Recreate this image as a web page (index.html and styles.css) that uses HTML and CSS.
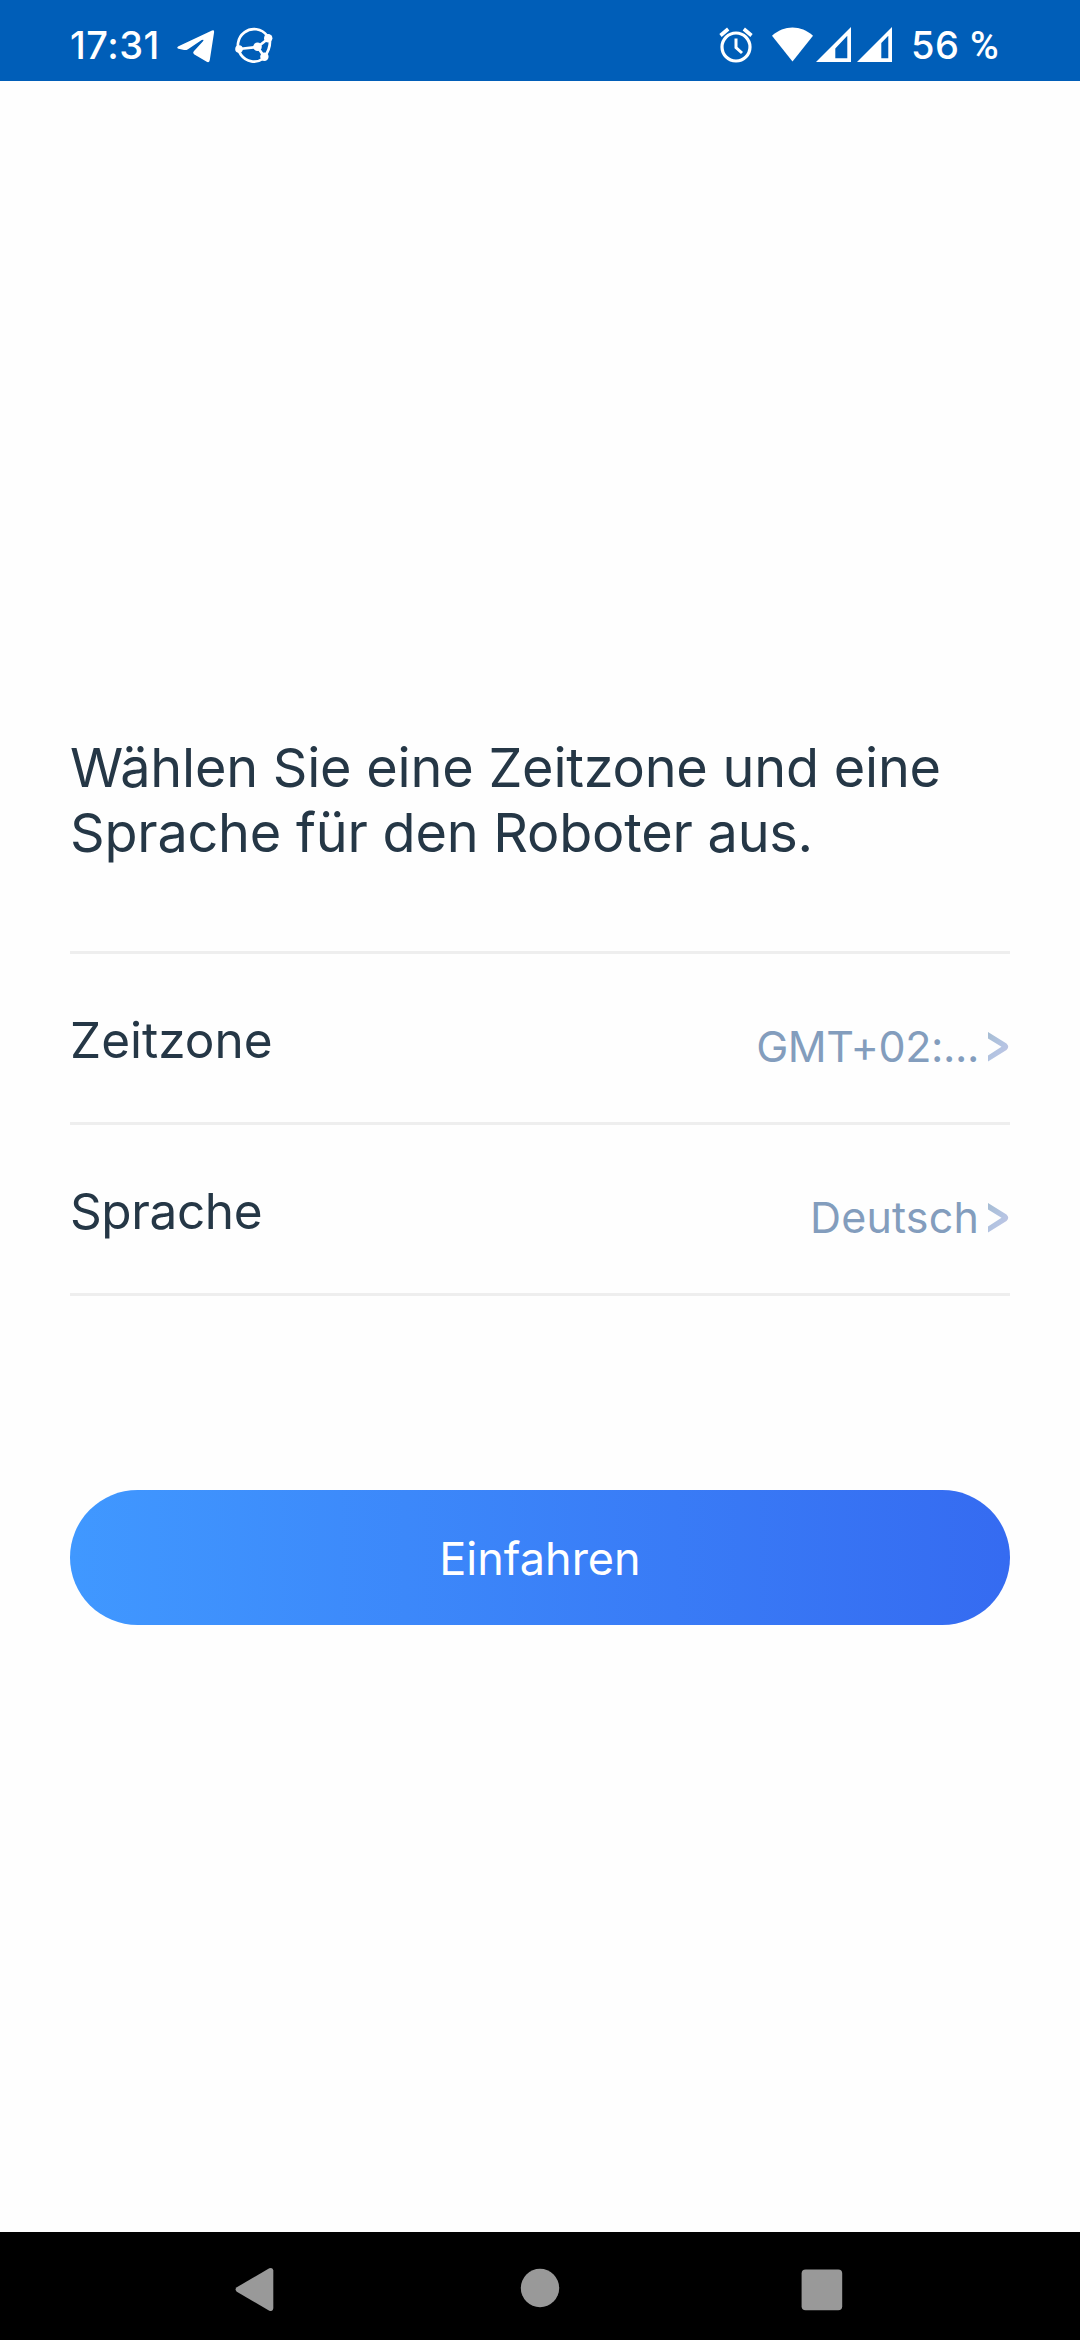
FILE: index.html
```html
<!DOCTYPE html>
<html lang="de">
<head>
<meta charset="utf-8">
<title>Zeitzone und Sprache</title>
<link rel="stylesheet" href="styles.css">
</head>
<body>
<div class="screen">
  <header class="status">
    <span class="clock">17:31</span>
    <svg class="telegram" width="40" height="36" viewBox="0 0 40 36"><path d="M3.5 18.2 37 2.6Q39.5 1.5 39.1 4.3L34.8 32Q34.2 35.4 31.3 33.6L19 26.2Q17.4 25 18.8 23.3L28 13.2Q29.5 10.8 26.7 12.1L13 21.2Q10.8 22.6 8 21.8L3.5 20.7Q1 19.7 3.5 18.2Z"/></svg>
    <svg class="globe" width="38" height="36" viewBox="0 0 38 36"><g fill="none" stroke="#fff" stroke-width="2.7"><path d="M32 8.5A16.2 16.2 0 1 0 28.5 31.5"/><path d="M34.5 11Q36.5 20 29.5 30M4 22 22.5 20 34 11M22.5 20 29.5 30"/></g><g fill="#fff"><circle cx="4" cy="22" r="3.8"/><circle cx="22.5" cy="19.8" r="4.3"/><circle cx="33.2" cy="11.2" r="4.2"/><circle cx="29.4" cy="29.8" r="4.2"/></g></svg>
    <div class="spacer"></div>
    <svg class="alarm" width="34" height="36" viewBox="0 0 34 36"><g fill="none" stroke="#fff"><circle cx="17" cy="20" r="14" stroke-width="3.2"/><path d="M17 11.5V20.5L23 26" stroke-width="3"/><path d="M1.5 8.5 9.2 2M32.5 8.5 24.8 2" stroke-width="3.6"/></g></svg>
    <svg class="wifi" width="41" height="35" viewBox="0 0 41 35"><path d="M0 8.7C12-2.4 29-2.4 41 8.7L20.5 34.5Z"/></svg>
    <svg class="signal" width="35" height="35" viewBox="0 0 35 35"><path fill-rule="evenodd" d="M35 0V35H0ZM31.3 8.7 19.3 21.4V31.3H31.3Z"/></svg>
    <svg class="signal second" width="35" height="35" viewBox="0 0 35 35"><path fill-rule="evenodd" d="M35 0V35H0ZM31.3 8.7 24.3 16.1V31.3H31.3Z"/></svg>
    <span class="battery">56 <span class="percent">%</span></span>
  </header>
  <main class="content">
    <h1 class="title">Wählen Sie eine Zeitzone und eine<br>Sprache für den Roboter aus.</h1>
    <div class="list">
      <div class="row timezone">
        <span class="label">Zeitzone</span>
        <span class="value">GMT+02:...</span>
        <svg class="chevron" width="21" height="30" viewBox="0 0 21 30"><defs><linearGradient id="tint" x1="0" y1="0" x2="1" y2="1"><stop offset="0" stop-color="#a6bdd3"/><stop offset=".6" stop-color="#b5c4e3"/><stop offset="1" stop-color="#c3c3e0"/></linearGradient></defs><path fill="url(#tint)" d="M0 0 18.5 11.5Q22 14.8 18.5 18L0 29.5V23.5L13.5 14.8 0 6.5Z"/></svg>
      </div>
      <div class="row language">
        <span class="label">Sprache</span>
        <span class="value">Deutsch</span>
        <svg class="chevron" width="21" height="30" viewBox="0 0 21 30"><path fill="url(#tint)" d="M0 0 18.5 11.5Q22 14.8 18.5 18L0 29.5V23.5L13.5 14.8 0 6.5Z"/></svg>
      </div>
    </div>
    <button class="submit">Einfahren</button>
  </main>
  <nav class="navbar">
    <svg width="40" height="46" viewBox="0 0 40 46"><path d="M1.8 20.3 34.3 1.3Q38 0 38.3 3.5V41Q38 45 34.3 43.7L1.8 24.7Q-.6 22.5 1.8 20.3Z"/></svg>
    <svg class="home" width="40" height="40" viewBox="0 0 40 40"><circle cx="20" cy="20" r="19.2"/></svg>
    <svg width="42" height="42" viewBox="0 0 42 42"><rect x=".6" y=".6" width="40.6" height="40.6" rx="4"/></svg>
  </nav>
</div>
</body>
</html>
```

FILE: styles.css
```css
* { box-sizing: border-box; }
body { margin: 0; background: #fefefe; font-family: Inter, sans-serif; }
.screen { width: 1080px; height: 2340px; display: flex; flex-direction: column; }

.status { height: 81px; background: #005eb8; color: #fff; display: flex; align-items: flex-start; padding: 27px 80px 0 70px; }
.status svg { fill: #fff; flex: none; }
.clock, .battery { margin-top: -1px; font-size: 38px; line-height: 38px; font-weight: 500; letter-spacing: .5px; white-space: nowrap; }
.clock { width: 105px; }
.spacer { flex: 1; }
.telegram { margin-top: 1px; }
.globe { margin-left: 20px; }
.alarm { margin-right: 19px; }
.wifi { margin-right: 3px; }
.second { margin-left: 6px; }
.battery { width: 89px; margin-left: 19px; }
.percent { font-family: Roboto, sans-serif; font-size: 39px; line-height: 38px; letter-spacing: 0; }

.content { flex: 1; padding: 654px 70px 0; }
.title { margin: 0 0 86px; font-size: 54px; line-height: 65px; font-weight: 400; color: #253746; white-space: nowrap; letter-spacing: -.22px; }
.list { border-top: 3px solid #eee; }
.row { height: 171px; border-bottom: 3px solid #eee; display: flex; align-items: center; }
.label { flex: 1; font-size: 49.5px; line-height: 60px; color: #253746; padding-top: 3px; }
.value { font-size: 43px; line-height: 52px; color: #839dbd; padding-top: 16px; }
.timezone .value { letter-spacing: -.4px; }
.language .label { letter-spacing: -.4px; }
.language .value { letter-spacing: .15px; }
.chevron { margin: 17px 1px 0 9px; }
.submit { display: block; width: 940px; height: 135px; margin-top: 194px; padding: 2px 0 0; border: 0; border-radius: 68px; background: linear-gradient(90deg, #4098ff, #356bf1); color: #fff; font: 400 45px/54px Inter, sans-serif; }

.navbar { height: 108px; background: #000; display: flex; align-items: center; justify-content: space-between; padding: 8px 237px 0 235px; }
.navbar svg { fill: #999; }
.home { margin: 0 0 4px 4px; }
```
